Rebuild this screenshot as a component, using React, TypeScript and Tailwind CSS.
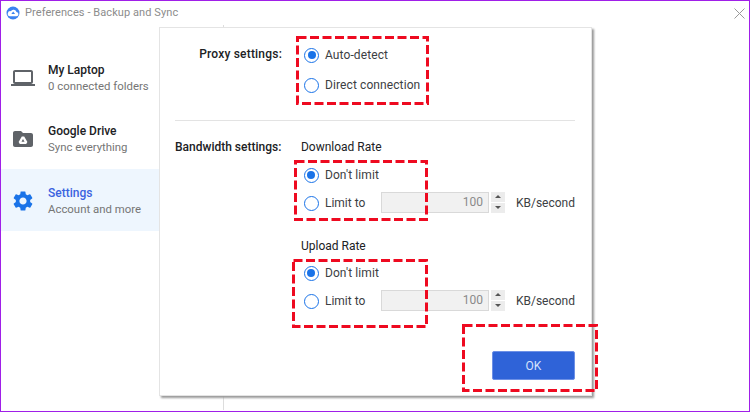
import React from "react"

function Radio({ checked }: { checked?: boolean }) {
  return (
    <span className="flex items-center justify-center w-[15px] h-[15px] shrink-0 rounded-full border-[1.5px] border-[#1a73e8] bg-white">
      {checked && <span className="w-[8px] h-[8px] rounded-full bg-[#1a73e8]" />}
    </span>
  )
}

function RadioRow({ label, checked, className }: { label: string; checked?: boolean; className: string }) {
  return (
    <div className={`flex items-center gap-[6px] pl-[3px] tracking-[0.1px] text-[#3c4043] ${className}`}>
      <Radio checked={checked} />
      <span>{label}</span>
    </div>
  )
}

function LimitRow() {
  return (
    <div className="flex items-center h-[28px] pl-[3px] text-[#3c4043]">
      <Radio />
      <span className="ml-[6px] w-[56px]">Limit to</span>
      <div className="flex items-center justify-end w-[108px] h-[21px] -mt-[2px] pr-[5px] border border-[#d9d9d9] bg-[#f1f1f1] text-[#8a8a8a]">
        100
      </div>
      <div className="flex flex-col justify-between w-[14px] h-[21px] -mt-[2px] ml-[2px]">
        <div className="flex items-center justify-center h-[10px] bg-[#ececec]">
          <span className="border-x-[3px] border-x-transparent border-b-[3px] border-b-[#555]" />
        </div>
        <div className="flex items-center justify-center h-[10px] bg-[#ececec]">
          <span className="border-x-[3px] border-x-transparent border-t-[3px] border-t-[#555]" />
        </div>
      </div>
      <span className="ml-[11px]">KB/second</span>
    </div>
  )
}

function RateGroup({ title, rowsClass, className }: { title: string; rowsClass: string; className: string }) {
  return (
    <div className={className}>
      <div className="flex items-center h-[20px] text-[#202124]">{title}</div>
      <div className={rowsClass}>
        <RadioRow label="Don't limit" checked className="h-[28px]" />
        <LimitRow />
      </div>
    </div>
  )
}

function DashBox({ w, h, className }: { w: number; h: number; className: string }) {
  return (
    <svg width={w} height={h} className={`absolute ${className}`}>
      <rect
        x="1.5"
        y="1.5"
        width={w - 3}
        height={h - 3}
        fill="none"
        stroke="#ee0a20"
        strokeWidth="3"
        strokeDasharray="9 3.5"
      />
    </svg>
  )
}

function NavItem({
  title,
  sub,
  icon,
  active,
}: {
  title: string
  sub: string
  icon: React.ReactNode
  active?: boolean
}) {
  return (
    <div className={`flex items-center gap-[13px] pl-[10px] ${active ? "h-[62px] pt-[1px] bg-[#eef6fe]" : "h-[61px]"}`}>
      {icon}
      <div className="leading-[16px]">
        <div className={`font-medium ${active ? "text-[#3b63e0]" : "text-[#202124]"}`}>{title}</div>
        <div className="text-[11.4px] text-[#757575]">{sub}</div>
      </div>
    </div>
  )
}

export default function App() {
  return (
    <div className="relative w-[750px] h-[412px] overflow-hidden border border-[#a01fe8] bg-white text-[12px] font-['Roboto',sans-serif]">
      {/* title bar */}
      <div className="flex items-center h-[24px] pl-[5px] pr-[4px]">
        <svg width="14" height="14" viewBox="0 0 14 14" className="shrink-0">
          <circle cx="7" cy="7" r="6.5" fill="#3b82f0" />
          <path d="M3.8 10.2h6.4a2.1 2.1 0 0 0 .3-4.2A3.1 3.1 0 0 0 4.8 5.2a2.5 2.5 0 0 0-1 5z" fill="#fff" />
          <path d="M7.2 5.6 5.3 8h3.8z" fill="#3b82f0" />
        </svg>
        <span className="ml-[5px] text-[11px] tracking-[0.08px] text-[#8c8c8c]">Preferences - Backup and Sync</span>
        <svg width="11" height="11" viewBox="0 0 11 11" className="ml-auto">
          <path d="M0.5 0.5 10.5 10.5M10.5 0.5 0.5 10.5" stroke="#9a9a9a" strokeWidth="1" fill="none" />
        </svg>
      </div>

      <div className="flex h-[385px]">
        {/* sidebar */}
        <div className="w-[158px] shrink-0 pt-[22px]">
          <NavItem
            title="My Laptop"
            sub="0 connected folders"
            icon={
              <svg width="24" height="24" viewBox="0 0 24 24" fill="#5f6368" className="shrink-0">
                <path d="M20 18c1.1 0 1.99-.9 1.99-2L22 6c0-1.1-.9-2-2-2H4c-1.1 0-2 .9-2 2v10c0 1.1.9 2 2 2H0v2h24v-2h-4zM4 6h16v10H4V6z" />
              </svg>
            }
          />
          <NavItem
            title="Google Drive"
            sub="Sync everything"
            icon={
              <svg width="24" height="24" viewBox="0 0 24 24" className="shrink-0">
                <path
                  fill="#5f6368"
                  d="M10 4H4c-1.1 0-2 .9-2 2v12c0 1.1.9 2 2 2h16c1.1 0 2-.9 2-2V8c0-1.1-.9-2-2-2h-8l-2-2z"
                />
                <path fill="#fff" d="M13.2 9.5h-2.4L7.6 15l1.2 2h6.4l1.2-2-3.2-5.5zM12 12l1.5 2.8h-3L12 12z" />
              </svg>
            }
          />
          <NavItem
            title="Settings"
            sub="Account and more"
            active
            icon={
              <svg width="24" height="24" viewBox="0 0 24 24" fill="#1a73e8" className="shrink-0">
                <path d="M19.14 12.94c.04-.3.06-.61.06-.94 0-.32-.02-.64-.07-.94l2.03-1.58a.49.49 0 0 0 .12-.61l-1.92-3.32a.488.488 0 0 0-.59-.22l-2.39.96c-.5-.38-1.03-.7-1.62-.94l-.36-2.54a.484.484 0 0 0-.48-.41h-3.84c-.24 0-.43.17-.47.41l-.36 2.54c-.59.24-1.13.57-1.62.94l-2.39-.96c-.22-.08-.47 0-.59.22L2.74 8.87c-.12.21-.08.47.12.61l2.03 1.58c-.05.3-.09.63-.09.94s.02.64.07.94l-2.03 1.58a.49.49 0 0 0-.12.61l1.92 3.32c.12.22.37.29.59.22l2.39-.96c.5.38 1.03.7 1.62.94l.36 2.54c.05.24.24.41.48.41h3.84c.24 0 .44-.17.47-.41l.36-2.54c.59-.24 1.13-.56 1.62-.94l2.39.96c.22.08.47 0 .59-.22l1.92-3.32c.12-.22.07-.47-.12-.61l-2.01-1.58zM12 15.6c-1.98 0-3.6-1.62-3.6-3.6s1.62-3.6 3.6-3.6 3.6 1.62 3.6 3.6-1.62 3.6-3.6 3.6z" />
              </svg>
            }
          />
        </div>
        {/* window content behind the dialog */}
        <div className="w-[65px] border-r border-[#dddddd]" />
      </div>

      {/* dialog */}
      <div className="absolute left-[158px] top-[26px] w-[433px] h-[369px] border border-[#e4e4e4] bg-white pl-[15px] pr-[16px] pt-[12px] shadow-[2px_2px_2px_#9a9a9a]">
        <div className="flex">
          <div className="w-[107px] pt-[6px] leading-[16px] text-right font-medium tracking-[0.2px] text-[#202124]">Proxy settings:</div>
          <div className="ml-[19px]">
            <RadioRow label="Auto-detect" checked className="h-[30px]" />
            <RadioRow label="Direct connection" className="h-[30px]" />
          </div>
        </div>

        <div className="mt-[20px] h-px bg-[#e3e3e3]" />

        <div className="flex mt-[16px]">
          <div className="w-[107px] h-[20px] flex items-center font-medium text-[#202124]">Bandwidth settings:</div>
          <div className="ml-[19px]">
            <RateGroup title="Download Rate" rowsClass="mt-[4px]" className="" />
            <RateGroup title="Upload Rate" rowsClass="mt-[3px]" className="mt-[19px]" />
          </div>
        </div>

        <div className="flex justify-end mt-[36px]">
          <button className="w-[83px] h-[29px] rounded-[2px] border border-[#6d90e6] bg-[#2f63d8] text-[#d5e2fb]">OK</button>
        </div>
      </div>

      {/* annotations */}
      <DashBox w={133} h={69} className="left-[295px] top-[35px]" />
      <DashBox w={134} h={61} className="left-[293px] top-[159px]" />
      <DashBox w={136} h={69} className="left-[291px] top-[258px]" />
      <DashBox w={136} h={68} className="left-[461px] top-[323px]" />
    </div>
  )
}
